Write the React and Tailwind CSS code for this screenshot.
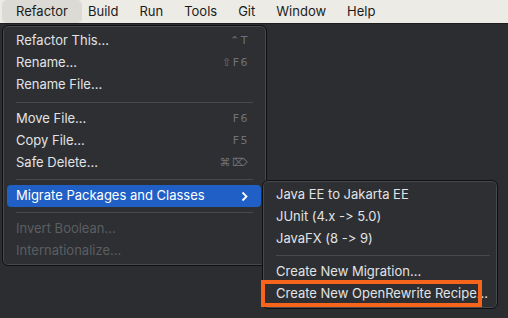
import React from "react";

const topMenus = ["Build", "Run", "Tools", "Git", "Window", "Help"];

function Row({ label, shortcut, disabled, active, sub }) {
  return (
    <div
      className={`h-[22px] flex items-center pl-[9px] pr-[13px] rounded-[4px] ${
        active ? "bg-[#1f5fc6] text-white" : disabled ? "text-[#5b5e63]" : "text-[#e1e3e7]"
      }`}
    >
      <span className="flex-1 whitespace-nowrap">{label}</span>
      {shortcut && (
        <span className="text-[11px] font-medium text-[#6f7278] font-['DejaVu_Sans',sans-serif] tracking-[1.5px] mr-[-1px]">
          {shortcut}
        </span>
      )}
      {sub && (
        <svg width="9" height="11" viewBox="0 0 9 11" className="mr-[-1px]">
          <path d="M2.5 1.5 L6.5 5.5 L2.5 9.5" fill="none" stroke="white" strokeWidth="1.8" />
        </svg>
      )}
    </div>
  );
}

function Sep({ right = "mr-[8px]" }) {
  return (
    <div className="h-[11px] flex items-center">
      <div className={`h-px flex-1 ml-[9px] ${right} bg-[#47494d]`} />
    </div>
  );
}

export default function App() {
  return (
    <div className="w-[508px] h-[318px] bg-[#2b2d30] relative overflow-hidden font-['Inter',sans-serif] text-[13px] [font-feature-settings:'calt'_0,'liga'_0]">
      {/* mac menu bar */}
      <div className="h-[24px] bg-[#edebe6] border-b border-[#1c1d1f] flex items-center text-[#1b1b1b]">
        <div className="ml-[2px] h-[23px] w-[80px] pl-[14px] flex items-center rounded-[5px] bg-[#dcdad5]">
          Refactor
        </div>
        <div className="flex gap-[21px] ml-[6px]">
          {topMenus.map((m) => (
            <span key={m}>{m}</span>
          ))}
        </div>
      </div>

      {/* Refactor menu */}
      <div className="absolute left-[2px] top-[25px] w-[265px] h-[241px] rounded-[6px] border border-[#101112] bg-[#2d2f32] shadow-[inset_0_0_0_1px_#46484c] pt-[4px] pl-[4px] pr-[5px]">
        <Row label="Refactor This..." shortcut="⌃T" />
        <Row label="Rename..." shortcut="⇧F6" />
        <Row label="Rename File..." />
        <div className="h-[1px]" />
        <Sep />
        <Row label="Move File..." shortcut="F6" />
        <Row label="Copy File..." shortcut="F5" />
        <Row label="Safe Delete..." shortcut="⌘⌦" />
        <Sep />
        <Row label="Migrate Packages and Classes" active sub />
        <Sep />
        <Row label="Invert Boolean..." disabled />
        <Row label="Internationalize..." disabled />
      </div>

      {/* submenu */}
      <div className="absolute left-[262px] top-[180px] w-[236px] h-[129px] rounded-[6px] border border-[#101112] bg-[#2d2f32] shadow-[inset_0_0_0_1px_#46484c] pt-[3px] pl-[4px] pr-[6px]">
        <Row label="Java EE to Jakarta EE" />
        <Row label="JUnit (4.x -> 5.0)" />
        <Row label="JavaFX (8 -> 9)" />
        <Sep right="mr-[1px]" />
        <Row label="Create New Migration..." />
        <Row label="Create New OpenRewrite Recipe..." />
      </div>

      {/* highlight annotation */}
      <div className="absolute left-[261px] top-[280px] w-[221px] h-[27px] border-[4px] border-[#f7641c]" />
    </div>
  );
}
